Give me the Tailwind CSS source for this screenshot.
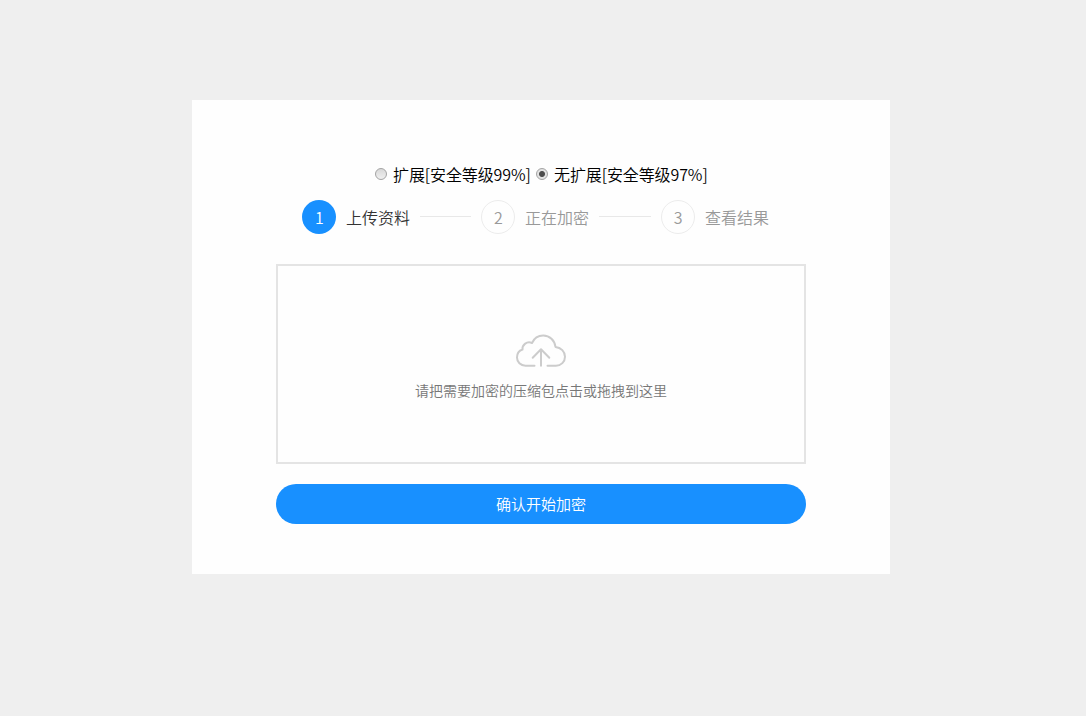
<!DOCTYPE html>
<html lang="zh-CN">
<head>
  <meta charset="UTF-8">
  <meta name="viewport" content="width=device-width, initial-scale=1.0">
  <title>上传资料</title>
  <script src="https://cdn.jsdelivr.net/npm/@tailwindcss/browser@4"></script>
</head>
<body class="min-h-screen bg-[#efefef] pt-[100px] pl-[192px] font-['Noto_Sans_CJK_SC',sans-serif] text-base font-[350]">
  <main class="w-[698px] h-[474px] bg-[#fefefe] px-[84px] pt-[62px]">

    <!-- Mode -->
    <div class="flex h-6 items-center pl-[99px] text-black whitespace-nowrap">
      <label class="flex items-center">
        <input type="radio" name="mode" class="mr-[6px] size-3 appearance-none rounded-full border border-[#a3a3a3] bg-linear-to-b from-[#d8d8d8] to-[#f0f0f0]">
        <span class="block w-[138px] tracking-[-0.1px]">扩展[安全等级99%]</span>
      </label>
      <label class="ml-[5px] flex items-center">
        <input type="radio" name="mode" checked class="mr-[6px] size-3 appearance-none rounded-full border border-[#a3a3a3] bg-[radial-gradient(circle,#4c4c4c_2.5px,#e2e2e2_3.5px)]">
        <span class="block tracking-[-0.1px]">无扩展[安全等级97%]</span>
      </label>
    </div>

    <!-- Steps -->
    <ol class="mt-[14px] flex h-[34px] items-center gap-[10px] pl-[26px] text-[#999] whitespace-nowrap">
      <li class="flex size-[34px] items-center justify-center rounded-full bg-[#1890ff] pl-px text-white">1</li>
      <li class="text-[#333]">上传资料</li>
      <li class="-mt-px h-px w-[51px] bg-[#e8e8e8]"></li>
      <li class="flex size-[34px] items-center justify-center rounded-full border border-[#ececec] pl-px">2</li>
      <li>正在加密</li>
      <li class="-mt-px h-px w-[52px] bg-[#e8e8e8]"></li>
      <li class="flex size-[34px] items-center justify-center rounded-full border border-[#ececec]">3</li>
      <li>查看结果</li>
    </ol>

    <!-- Upload -->
    <div class="mt-[30px] flex h-[200px] w-[530px] flex-col items-center border-2 border-[#e4e4e4] pt-[67px]">
      <svg class="h-[36px] w-[52px]" viewBox="0 0 52 36" fill="none" stroke="#ccc" stroke-width="2" stroke-linecap="round" stroke-linejoin="round">
        <path d="M19.500 32.700H10.500C5.500 32.700 2 29 2 24.500c0-4 2.500-7 5.500-8C7 12 12 7.500 17 10C19 5.500 23 2.500 28.200 2.500c6.500 0 11.500 5 12.300 11.500C46 14.500 50 18.700 50 23.800c0 5-4 8.900-9 8.900h-8.500"/>
        <path d="M26 32.700V16.500M17.700 24.700L26 16.200l8.300 8.500"/>
      </svg>
      <p class="mt-[11px] text-sm leading-5 text-[#777]">请把需要加密的压缩包点击或拖拽到这里</p>
    </div>

    <button class="mt-5 block h-10 w-[530px] rounded-full bg-[#1890ff] text-[15px] text-white">确认开始加密</button>
  </main>
</body>
</html>
